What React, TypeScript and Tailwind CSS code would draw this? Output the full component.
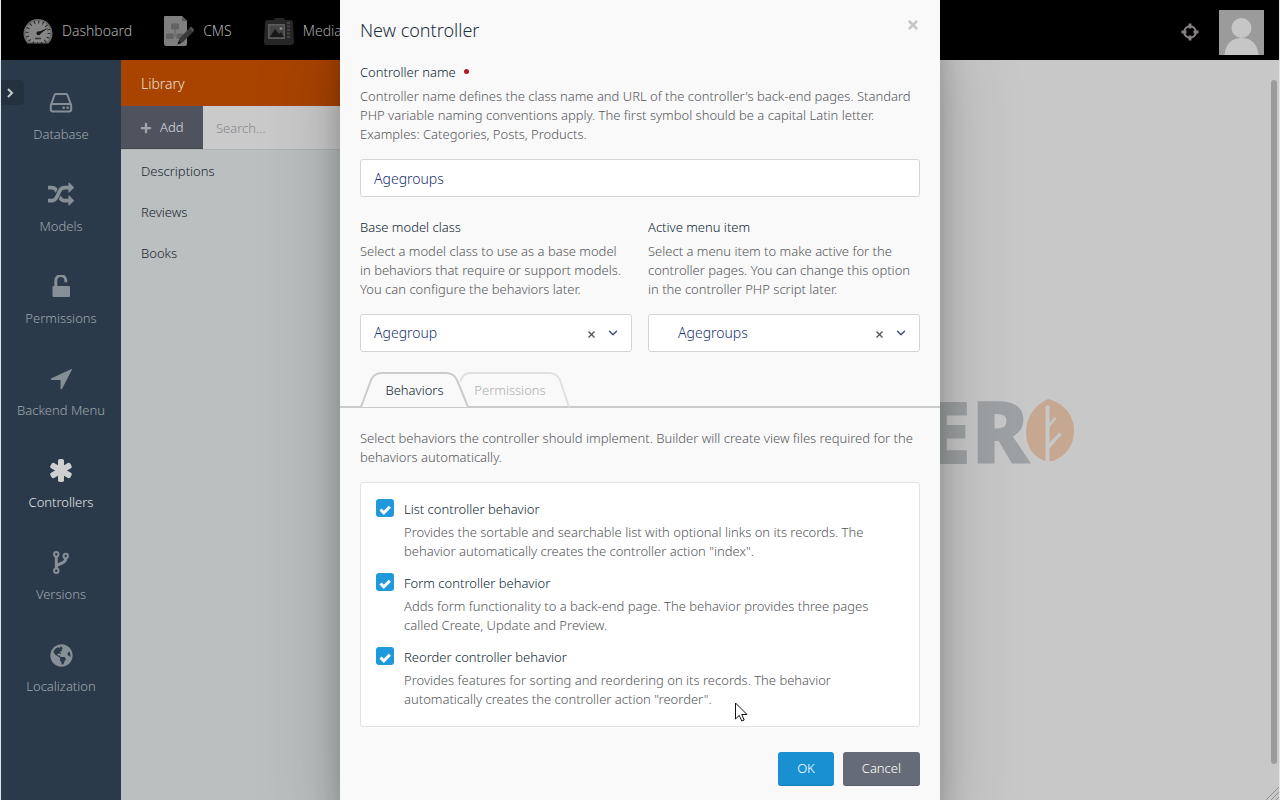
import type { ReactNode } from "react";
import { FaGlobeAmericas, FaPlus, FaTimes } from "react-icons/fa";
import { FiChevronDown } from "react-icons/fi";

function DashboardIcon() {
  return (
    <svg width="30" height="26" viewBox="0 0 30 26" aria-hidden="true">
      <path d="M4.500 25.500A14.500 14.500 0 1 1 25.500 25.500Z" fill="#6b6b6b" />
      <path d="M6 24A12.500 12.500 0 1 1 24 24Z" fill="#858585" />
      <circle cx="15" cy="15" r="11" fill="none" stroke="#202020" strokeWidth="3" strokeDasharray="1 3.320" />
      <path d="M15.500 14L25.500 9.500L16.500 16.500Z" fill="#161616" />
      <circle cx="15.500" cy="15.200" r="2" fill="#161616" />
      <path d="M12 20.500h6" stroke="#333" strokeWidth="1.500" />
    </svg>
  );
}

function CmsIcon() {
  return (
    <svg width="30" height="30" viewBox="0 0 30 30" aria-hidden="true">
      <path d="M0 1q0-1 1-1h17l5 5v23q0 2-2 2H2q-2 0-2-2z" fill="#7f7f7f" />
      <path d="M18 0l5 5h-5z" fill="#5a5a5a" />
      <path d="M7.500 8h7v5h-7zM2.500 18h6.500v4.500H2.500zM13 18h6v4.500h-6zM11 13v6M9 20h4" fill="#636363" stroke="#636363" />
      <path d="M13.500 28.500l2-6L26 11.500l4 3.500-11 11z" fill="#3a3a3a" />
      <path d="M25.500 12l1.500-1.500 3 3-1 2z" fill="#565656" />
      <path d="M13.500 28.500l1.500-4 2.500 2.500z" fill="#151515" />
    </svg>
  );
}

function MediaIcon() {
  return (
    <svg width="30" height="27" viewBox="0 0 30 27" aria-hidden="true">
      <path d="M10 2q0-2 2-2h7q2 0 2 2h5q3 0 3 3l1 19q0 3-3 3H3q-3 0-3-3L1 5q0-3 3-3z" fill="#272727" />
      <path d="M4 6h17v15H4z" fill="#5d5d5d" />
      <path d="M5.500 7.500h14v12h-14z" fill="#454545" />
      <path d="M6 19l5-8 4 5 2-2 3 5z" fill="#191919" />
      <circle cx="17" cy="10.500" r="1.500" fill="#8a8a8a" />
      <path d="M24.500 4v17" stroke="#454545" strokeWidth="3" strokeDasharray="2 1.500" />
    </svg>
  );
}

function DatabaseIcon() {
  return (
    <svg width="24" height="24" viewBox="0 0 24 24" fill="none" stroke="currentColor" strokeWidth="2" aria-hidden="true">
      <path d="M2 14L5.300 4.500Q5.700 3 7 3H17Q18.300 3 18.700 4.500L22 14" />
      <rect x="1.800" y="13" width="20.400" height="7.400" rx="1.800" />
      <circle cx="14.700" cy="16.700" r="1.300" fill="currentColor" stroke="none" />
      <circle cx="18.700" cy="16.700" r="1.300" fill="currentColor" stroke="none" />
    </svg>
  );
}

function ModelsIcon() {
  return (
    <svg width="26" height="26" viewBox="0 0 1792 1792" fill="currentColor" aria-hidden="true">
      <path d="M666 481q-60 92-137 273-22-45-37-72.500t-40.500-63.500-51-56.500-63-35-81.500-14.500h-224q-14 0-23-9t-9-23v-192q0-14 9-23t23-9h224q250 0 410 225zm1126 799q0 14-9 23l-320 320q-9 9-23 9-13 0-22.500-9.500t-9.500-22.500v-192q-32 0-85 .5t-81 1-73-1-71-5-64-10.500-63-18.500-58-28.500-59-40-55-53.500-56-69.500q59-93 136-273 22 45 37 72.500t40.500 63.500 51 56.500 63 35 81.500 14.500h256v-192q0-14 9-23t23-9q12 0 24 10l319 319q9 9 9 23zm0-896q0 14-9 23l-320 320q-9 9-23 9-13 0-22.500-9.500t-9.500-22.500v-192h-256q-48 0-87 15t-69 45-51 61.500-45 77.500q-32 62-78 171-29 66-49.500 111t-54 105-64 100-74 83-90 68.500-106.500 42-128 16.500h-224q-14 0-23-9t-9-23v-192q0-14 9-23t23-9h224q48 0 87-15t69-45 51-61.500 45-77.500q32-62 78-171 29-66 49.500-111t54-105 64-100 74-83 90-68.500 106.500-42 128-16.500h256v-192q0-14 9-23t23-9q12 0 24 10l319 319q9 9 9 23z" />
    </svg>
  );
}

function PermissionsIcon() {
  return (
    <svg width="24" height="24" viewBox="0 0 24 24" aria-hidden="true">
      <rect x="3.500" y="11" width="17.500" height="11" rx="1" fill="currentColor" />
      <path d="M6.800 12V5.500a5 5 0 0 1 10 0v.5" fill="none" stroke="currentColor" strokeWidth="3" strokeLinecap="round" />
    </svg>
  );
}

function MenuIcon() {
  return (
    <svg width="24" height="24" viewBox="0 0 24 24" fill="currentColor" stroke="currentColor" strokeLinejoin="round" aria-hidden="true">
      <path d="M22.500 2.500L12.500 22l-.5-.2V12.500H2.300L2 12z" />
    </svg>
  );
}

function ControllersIcon() {
  return (
    <svg width="24" height="24" viewBox="0 0 24 24" fill="currentColor" aria-hidden="true">
      <rect x="9" y="0" width="6" height="23" rx="1.800" />
      <rect x="9" y="0" width="6" height="23" rx="1.800" transform="rotate(60 12 11.500)" />
      <rect x="9" y="0" width="6" height="23" rx="1.800" transform="rotate(120 12 11.500)" />
    </svg>
  );
}

function VersionsIcon() {
  return (
    <svg width="24" height="24" viewBox="0 0 24 24" fill="none" stroke="currentColor" strokeWidth="2" aria-hidden="true">
      <circle cx="7.300" cy="3.300" r="2.200" />
      <circle cx="7.300" cy="19.700" r="2.200" />
      <circle cx="16.700" cy="5" r="2.200" />
      <path d="M7.300 5.500v12M16.700 7.500c0 6.500-9.400 4-9.400 8.500" strokeWidth="3" />
    </svg>
  );
}

function CrosshairIcon() {
  return (
    <svg width="18" height="18" viewBox="0 0 18 18" fill="none" stroke="#8b8287" aria-hidden="true">
      <circle cx="9" cy="9" r="5.800" strokeWidth="2" />
      <path d="M9 .5v5M9 12.500v5M.5 9h5M12.500 9h5" strokeWidth="2.800" />
    </svg>
  );
}

const topNav = [
  { label: "Dashboard", icon: <DashboardIcon /> },
  { label: "CMS", icon: <CmsIcon /> },
  { label: "Media", icon: <MediaIcon /> },
];

const sideNav = [
  { label: "Database", icon: <DatabaseIcon /> },
  { label: "Models", icon: <ModelsIcon /> },
  { label: "Permissions", icon: <PermissionsIcon /> },
  { label: "Backend Menu", icon: <MenuIcon /> },
  { label: "Controllers", icon: <ControllersIcon />, active: true },
  { label: "Versions", icon: <VersionsIcon /> },
  { label: "Localization", icon: <FaGlobeAmericas size={23} /> },
];

const library = ["Descriptions", "Reviews", "Books"];

const behaviors = [
  {
    id: "list",
    name: "List controller behavior",
    text: "Provides the sortable and searchable list with optional links on its records. The behavior automatically creates the controller action \"index\".",
  },
  {
    id: "form",
    name: "Form controller behavior",
    text: "Adds form functionality to a back-end page. The behavior provides three pages called Create, Update and Preview.",
  },
  {
    id: "reorder",
    name: "Reorder controller behavior",
    text: "Provides features for sorting and reordering on its records. The behavior automatically creates the controller action \"reorder\".",
  },
];

function TopBar() {
  return (
    <header className="flex h-[60px] shrink-0 items-center justify-between bg-black pl-[22px] pr-[15px]">
      <nav className="flex items-center gap-8 pt-[2px]">
        {topNav.map((item) => (
          <a key={item.label} href="#" className="flex items-center gap-[9px] text-sm text-[#b0b0b0]">
            {item.icon}
            {item.label}
          </a>
        ))}
      </nav>
      <div className="flex items-center gap-5 pt-1">
        <button type="button" aria-label="Preview">
          <CrosshairIcon />
        </button>
        <a href="#" aria-label="Account">
          <svg width="45" height="45" viewBox="0 0 45 45">
            <path fill="#9b9b9b" d="M0 0h45v45H0z" />
            <circle cx="22.500" cy="18" r="10" fill="#c6c6c6" />
            <path d="M5.500 45c1-11 7-17 17-17s16 6 17 17z" fill="#c6c6c6" />
          </svg>
        </a>
      </div>
    </header>
  );
}

function SideNav() {
  return (
    <nav className="relative flex w-[120px] shrink-0 flex-col bg-[#2b3a4a] pt-[31px]">
      <button
        type="button"
        aria-label="Expand"
        className="absolute left-0 top-5 flex h-[25px] w-[23px] items-center rounded-r bg-[#243240] pl-[6px] text-[#c5c9cc]"
      >
        <svg width="7" height="10" viewBox="0 0 7 10" fill="none" stroke="currentColor" strokeWidth="2">
          <path d="M1 1l4 4-4 4" />
        </svg>
      </button>
      {sideNav.map((item) => (
        <a
          key={item.label}
          href="#"
          className={`flex h-[92px] flex-col items-center gap-[9px] text-[13px] leading-5 ${item.active ? "text-[#e2e4e6]" : "text-[#9fa7af]"}`}
        >
          <span className={`flex h-6 items-center ${item.active ? "text-[#cdcfd1]" : "text-[#868e96]"}`}>{item.icon}</span>
          {item.label}
        </a>
      ))}
    </nav>
  );
}

function LibraryPanel() {
  return (
    <aside className="w-[300px] shrink-0 bg-[#babfc0]">
      <h2 className="flex h-[46px] items-center bg-[#a94300] px-5 pt-[2px] text-sm font-light text-[#ebe0da]">Library</h2>
      <div className="flex h-11 border-b border-[#aeb3b6] bg-[#cacaca]">
        <button type="button" className="flex w-[82px] items-center gap-2 border-b border-[#434750] bg-[#4f535e] pl-[19px] pt-[2px] text-[13px] text-[#dddfe2]">
          <FaPlus size={12} className="text-[#a1a4a9]" />
          Add
        </button>
        <input
          type="search"
          aria-label="Search"
          placeholder="Search..."
          className="min-w-0 flex-1 bg-transparent px-[13px] pt-[2px] text-[13px] outline-none placeholder:text-[#87898b]"
        />
      </div>
      <ul>
        {library.map((name) => (
          <li key={name} className="h-[41px]">
            <a href="#" className="flex h-full items-center px-5 pt-[2px] text-[13px] text-[#1c2631]">{name}</a>
          </li>
        ))}
      </ul>
    </aside>
  );
}

function BackgroundLogo() {
  return (
    <main className="relative flex flex-1 items-center justify-center bg-[#c8c8c8]">
      <div className="flex w-[448px] items-center justify-end font-['Open_Sans',sans-serif] text-[87px] font-extrabold leading-[84px] text-[#9ea1a3]">
        ER
        <svg width="48" height="62" viewBox="0 0 48 62" aria-hidden="true" className="-ml-1 shrink-0">
          <path d="M22 0C9 6 0 18 0 33c0 16 9 26 19 29h8c13-5 21-16 21-30C48 15 37 4 22 0z" fill="#c6a792" />
          <path d="M19.500 62V7.500l2.500-1.500 1.500 1V24l5.500-6 1.500 1.500-7 8.500v15.500l10-10 2 2-12 14V62z" fill="#c8c8c8" />
        </svg>
      </div>
      <div className="absolute right-[2px] top-5 h-[684px] w-[6px] rounded-full bg-[#9b9b9b]" />
      <svg width="14" height="14" viewBox="0 0 14 14" stroke="#929292" className="absolute bottom-0 right-0" aria-hidden="true">
        <path d="M1 14L14 1M6 14l8-8M11 14l3-3" />
      </svg>
    </main>
  );
}

function Field({ id, label, required, help, children }: { id: string; label: string; required?: boolean; help: string; children: ReactNode }) {
  return (
    <div className="min-w-0 flex-1">
      <label htmlFor={id} className="flex items-center text-[13px] leading-5 text-[#0f1f33]">
        {label}
        {required && <span className="mb-[2px] ml-2 size-[5px] rounded-full bg-[#b3152b]" />}
      </label>
      <p className="mb-[15px] mt-[5px] pr-[6px] text-[13px] leading-[19px] text-[#55575a]">{help}</p>
      {children}
    </div>
  );
}

function SelectBox({ id, value, indent }: { id: string; value: string; indent?: boolean }) {
  return (
    <div className="relative">
      <select
        id={id}
        defaultValue={value}
        className={`h-[38px] w-full appearance-none rounded-[3px] border border-[#d1d6d9] bg-white pr-14 text-sm text-[#1a3270] outline-none ${indent ? "pl-[29px]" : "pl-[13px]"}`}
      >
        <option>{value}</option>
      </select>
      <button type="button" aria-label="Clear" className="absolute right-9 top-4 text-[#555]">
        <svg width="9" height="9" viewBox="0 0 9 9" stroke="currentColor" strokeWidth="1.400">
          <path d="M1.500 1.500l6 6M7.500 1.500l-6 6" />
        </svg>
      </button>
      <FiChevronDown size={14} strokeWidth={2.5} className="pointer-events-none absolute right-3 top-3 text-[#405178]" />
    </div>
  );
}

function Tab({ label, active }: { label: string; active?: boolean }) {
  return (
    <button
      type="button"
      role="tab"
      aria-selected={!!active}
      className={`relative flex h-9 items-center justify-center pt-[2px] text-[13px] ${active ? "z-10 w-[109px] text-[#0f1f33]" : "-ml-[9px] w-[112px] pr-3 text-[#abadaf]"}`}
    >
      {active ? (
        <svg width="109" height="36" viewBox="0 0 109 36" className="absolute inset-0" fill="#f9f9f9" stroke="#c9cbcd" strokeWidth="2">
          <path d="M0 35H1L11 8Q14 1 22 1H86Q94 1 97 8L108 35H109" />
        </svg>
      ) : (
        <svg width="112" height="36" viewBox="0 0 112 36" className="absolute inset-0" fill="none" stroke="#dfe0e1" strokeWidth="2">
          <path d="M0 10Q3 1 10 1H89Q97 1 100 8L109 35" />
        </svg>
      )}
      <span className="relative">{label}</span>
    </button>
  );
}

function Modal() {
  return (
    <div className="absolute inset-0 z-20 flex justify-center overflow-hidden">
      <div
        role="dialog"
        aria-label="New controller"
        className="w-[600px] bg-[#f9f9f9] shadow-[0_27px_24px_rgba(0,0,0,0.2),0_40px_77px_rgba(0,0,0,0.22)]"
      >
        <form>
          <div className="flex items-start justify-between px-5 pt-[18px]">
            <h1 className="text-lg font-light leading-6 text-[#1f3044]">New controller</h1>
            <button type="button" aria-label="Close" className="text-[#c4c5c6]">
              <FaTimes size={14} />
            </button>
          </div>

          <div className="flex px-5 pt-5">
            <Field
              id="name"
              label="Controller name"
              required
              help="Controller name defines the class name and URL of the controller's back-end pages. Standard PHP variable naming conventions apply. The first symbol should be a capital Latin letter. Examples: Categories, Posts, Products."
            >
              <input
                id="name"
                type="text"
                defaultValue="Agegroups"
                className="h-[38px] w-full rounded-[3px] border border-[#d1d6d9] bg-white px-[13px] text-sm text-[#1a3270] outline-none"
              />
            </Field>
          </div>

          <div className="flex gap-4 px-5 pt-5">
            <Field
              id="model"
              label="Base model class"
              help="Select a model class to use as a base model in behaviors that require or support models. You can configure the behaviors later."
            >
              <SelectBox id="model" value="Agegroup" />
            </Field>
            <Field
              id="menu"
              label="Active menu item"
              help="Select a menu item to make active for the controller pages. You can change this option in the controller PHP script later."
            >
              <SelectBox id="menu" value="Agegroups" indent />
            </Field>
          </div>

          <div role="tablist" className="relative mt-5 flex px-5">
            <span className="absolute inset-x-0 bottom-0 h-[2px] bg-[#c9cbcd]" />
            <Tab label="Behaviors" active />
            <Tab label="Permissions" />
          </div>

          <div className="px-5 pt-[21px]">
            <p className="text-[13px] leading-[19px] text-[#55575a]">
              Select behaviors the controller should implement. Builder will create view files required for the behaviors automatically.
            </p>
            <ul className="mt-[15px] flex flex-col gap-3 rounded-[3px] border border-[#dfe2e4] bg-white px-[15px] pb-[17px] pt-4">
              {behaviors.map((item) => (
                <li key={item.id} className="flex gap-[10px]">
                  <span className="relative size-[18px] shrink-0">
                    <input
                      id={item.id}
                      type="checkbox"
                      defaultChecked
                      className="block size-[18px] appearance-none rounded-[3px] bg-[#1f99dc]"
                    />
                    <svg
                      width="18"
                      height="18"
                      viewBox="0 0 18 18"
                      fill="none"
                      stroke="#fff"
                      strokeWidth="3"
                      className="pointer-events-none absolute inset-0"
                    >
                      <path d="M4.500 10.500l3.300 3.300 6-6" />
                    </svg>
                  </span>
                  <div className="pr-6">
                    <label htmlFor={item.id} className="block text-[13px] leading-5 text-[#0f1f33]">{item.name}</label>
                    <p className="mt-1 text-[13px] leading-[19px] text-[#55575a]">{item.text}</p>
                  </div>
                </li>
              ))}
            </ul>
          </div>

          <div className="flex justify-end gap-[9px] px-5 pt-[25px]">
            <button type="submit" className="h-[34px] rounded-[3px] border-b border-[#1781ba] bg-[#1991d1] px-[19px] pt-px text-[13px] text-white">
              OK
            </button>
            <button type="button" className="h-[34px] rounded-[3px] border-b border-[#585d67] bg-[#656b77] px-[19px] pt-px text-[13px] text-white">
              Cancel
            </button>
          </div>
        </form>
      </div>
    </div>
  );
}

function Pointer() {
  return (
    <svg width="13" height="20" viewBox="0 0 13 20" fill="#fff" stroke="#111" className="pointer-events-none absolute left-[734px] top-[702px] z-30" aria-hidden="true">
      <path d="M.5 1v16l3.700-3.600 2.600 5.600 2.400-1-2.500-5.500H12z" />
    </svg>
  );
}

export default function App() {
  return (
    <div className="relative flex min-h-screen flex-col overflow-hidden border-x border-[#dfe6ea] font-['Noto_Sans',sans-serif] font-light">
      <TopBar />
      <div className="flex flex-1">
        <SideNav />
        <LibraryPanel />
        <BackgroundLogo />
      </div>
      <Modal />
      <Pointer />
    </div>
  );
}
